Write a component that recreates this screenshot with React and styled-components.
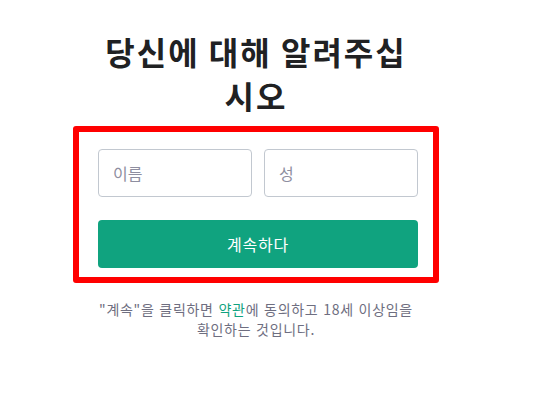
import React from 'react';
import styled, { createGlobalStyle } from 'styled-components';

const GlobalStyle = createGlobalStyle`
  html, body {
    margin: 0;
    padding: 0;
    background: #ffffff;
  }
  body {
    font-family: "Noto Sans CJK KR", "Noto Sans", sans-serif;
  }
`;

const Page = styled.main`
  display: flex;
  flex-direction: column;
  align-items: center;
  padding: 29px 23px 0 0;
`;

const Title = styled.h1`
  width: 320px;
  margin: 0;
  text-align: center;
  font-size: 32px;
  font-weight: 700;
  line-height: 44px;
  letter-spacing: 2px;
  color: #202123;
`;

const Highlight = styled.div`
  margin-top: 9px;
  padding: 17px 15px 9px 19px;
  border: 6.5px solid #ff0000;
  border-radius: 3px;
`;

const Form = styled.form`
  width: 320px;
  display: flex;
  flex-direction: column;
  gap: 23px;
`;

const NameRow = styled.div`
  display: grid;
  grid-template-columns: 1fr 1fr;
  gap: 12px;
`;

const Field = styled.input`
  box-sizing: border-box;
  width: 100%;
  height: 48px;
  padding: 0 14px;
  border: 1px solid #c2c8d0;
  border-radius: 4px;
  font-family: inherit;
  font-size: 16px;
  color: #2d333a;
  outline: none;

  &::placeholder {
    color: #8e8ea0;
  }
`;

const Continue = styled.button`
  height: 48px;
  border: none;
  border-radius: 4px;
  background: #10a37f;
  color: #ffffff;
  font-family: inherit;
  font-size: 16px;
  letter-spacing: 0.8px;
  cursor: pointer;
`;

const Terms = styled.p`
  width: 320px;
  margin: 16px 0 0;
  text-align: center;
  font-size: 14px;
  line-height: 20px;
  letter-spacing: 0.7px;
  word-spacing: 1px;
  color: #6e6e80;
`;

const TermsLink = styled.a`
  color: #10a37f;
  text-decoration: none;
`;

export default function App() {
  return (
    <>
      <GlobalStyle />
      <Page>
        <Title>당신에 대해 알려주십시오</Title>
        <Highlight>
          <Form onSubmit={(e) => e.preventDefault()}>
            <NameRow>
              <Field placeholder='이름' />
              <Field placeholder='성' />
            </NameRow>
            <Continue type='submit'>계속하다</Continue>
          </Form>
        </Highlight>
        <Terms>
          "계속"을 클릭하면 <TermsLink href='#'>약관</TermsLink>에 동의하고 18세 이상임을 확인하는 것입니다.
        </Terms>
      </Page>
    </>
  );
}
